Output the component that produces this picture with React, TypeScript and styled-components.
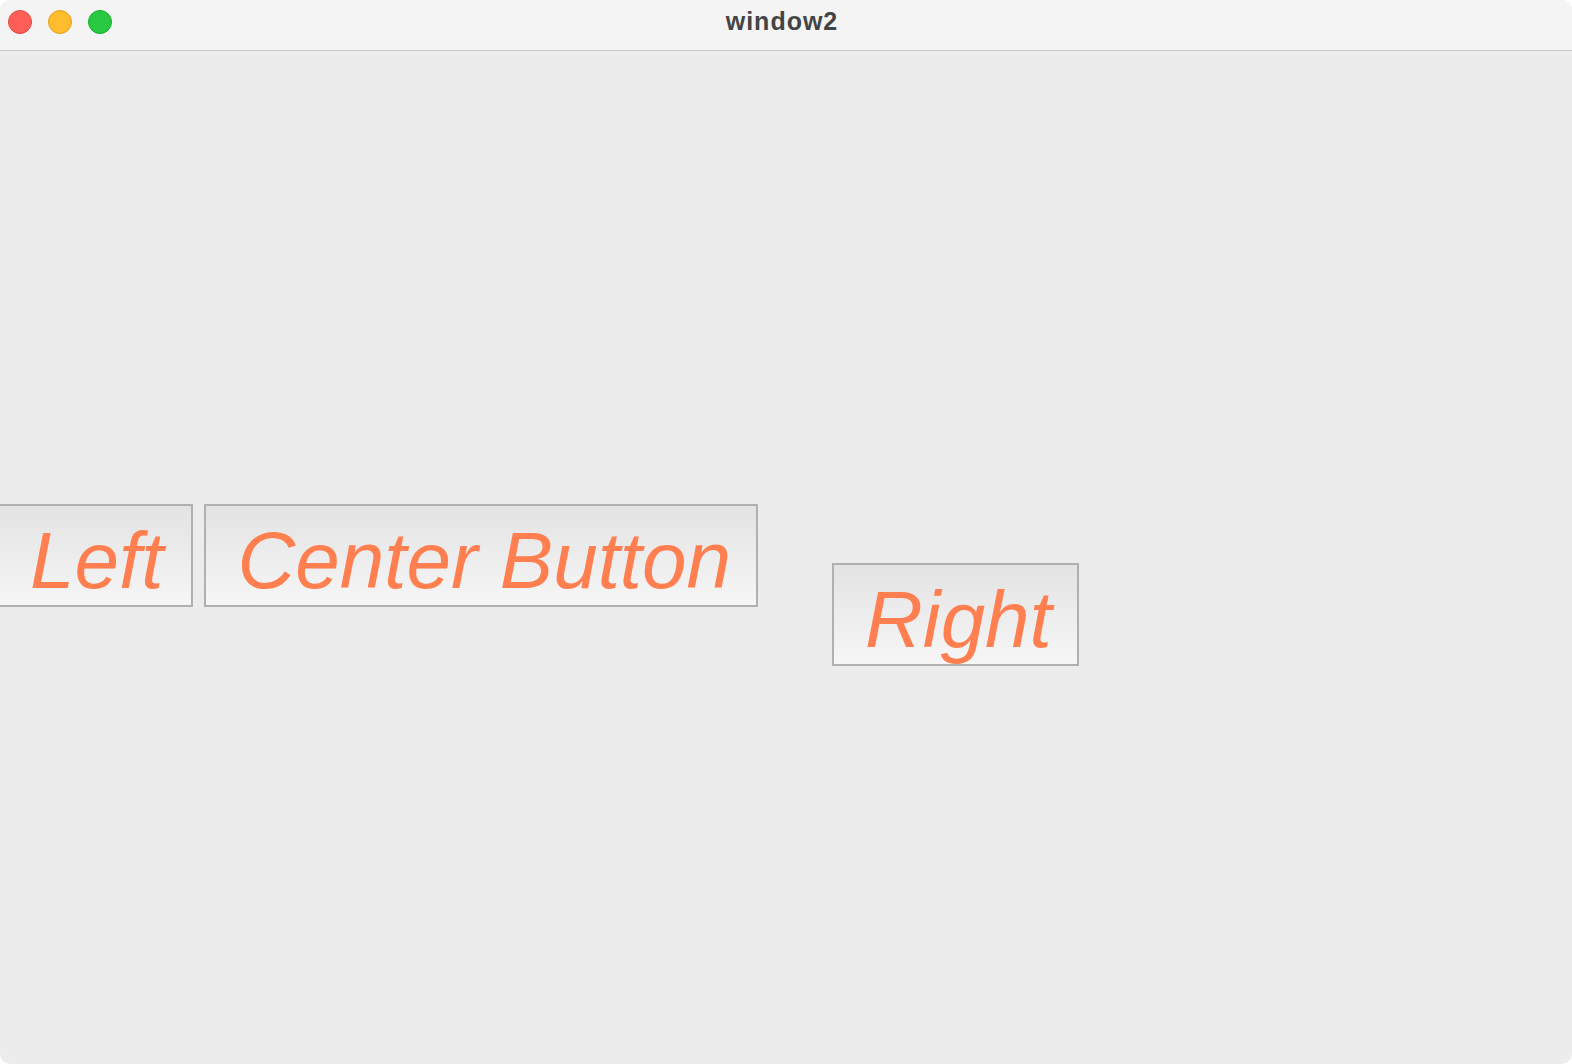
import React from "react";
import styled, { createGlobalStyle } from "styled-components";

const Global = createGlobalStyle`
  html, body { margin: 0; padding: 0; background: #ffffff; }
  body { width: 1572px; height: 1064px; overflow: hidden; }
  #root { width: 1572px; height: 1064px; }
`;

const Window = styled.div`
  width: 1572px;
  height: 1064px;
  display: flex;
  flex-direction: column;
  border-radius: 10px;
  overflow: hidden;
  background: #ececec;
`;

const TitleBar = styled.div`
  height: 50px;
  flex: 0 0 50px;
  display: flex;
  align-items: flex-start;
  position: relative;
  background: #f4f4f4;
  border-bottom: 1px solid #c9c9c9;
`;

const Lights = styled.div`
  display: flex;
  gap: 16px;
  padding-left: 8px;
  padding-top: 10px;
`;

const Light = styled.span<{ $c: string; $b: string }>`
  width: 24px;
  height: 24px;
  border-radius: 50%;
  box-sizing: border-box;
  background: ${(p) => p.$c};
  border: 1px solid ${(p) => p.$b};
`;

const Title = styled.div`
  position: absolute;
  left: 0;
  right: 0;
  top: 0;
  height: 42px;
  display: flex;
  align-items: center;
  justify-content: center;
  font-family: "Liberation Sans", Arial, sans-serif;
  font-weight: 700;
  font-size: 25px;
  letter-spacing: 1px;
  color: #444444;
  padding-right: 8px;
`;

const Content = styled.div`
  flex: 1;
  display: flex;
  align-items: flex-start;
  padding-top: 453px;
`;

const Btn = styled.div<{ $offsetX?: number; $offsetY?: number; $padR?: number }>`
  box-sizing: border-box;
  height: 103px;
  margin-left: ${(p) => p.$offsetX ?? 0}px;
  margin-top: ${(p) => p.$offsetY ?? 0}px;
  padding: 15px ${(p) => p.$padR ?? 25}px 4px 31px;
  border: 2px solid #b0b0b0;
  background: linear-gradient(to bottom, #e3e3e3 0%, #f6f6f6 100%);
  font-family: "Liberation Sans", Arial, sans-serif;
  font-style: italic;
  font-size: 80px;
  line-height: 80px;
  color: #ff7f50;
  white-space: nowrap;
`;

export default function App() {
  return (
    <>
      <Global />
      <Window>
        <TitleBar>
          <Lights>
            <Light $c="#ff5f57" $b="#e2463f" />
            <Light $c="#febc2e" $b="#e1a116" />
            <Light $c="#28c840" $b="#14ae2c" />
          </Lights>
          <Title>window2</Title>
        </TitleBar>
        <Content>
          <Btn $offsetX={-3} $padR={28}>Left</Btn>
          <Btn $offsetX={11}>Center Button</Btn>
          <Btn $offsetX={74} $offsetY={59}>Right</Btn>
        </Content>
      </Window>
    </>
  );
}
